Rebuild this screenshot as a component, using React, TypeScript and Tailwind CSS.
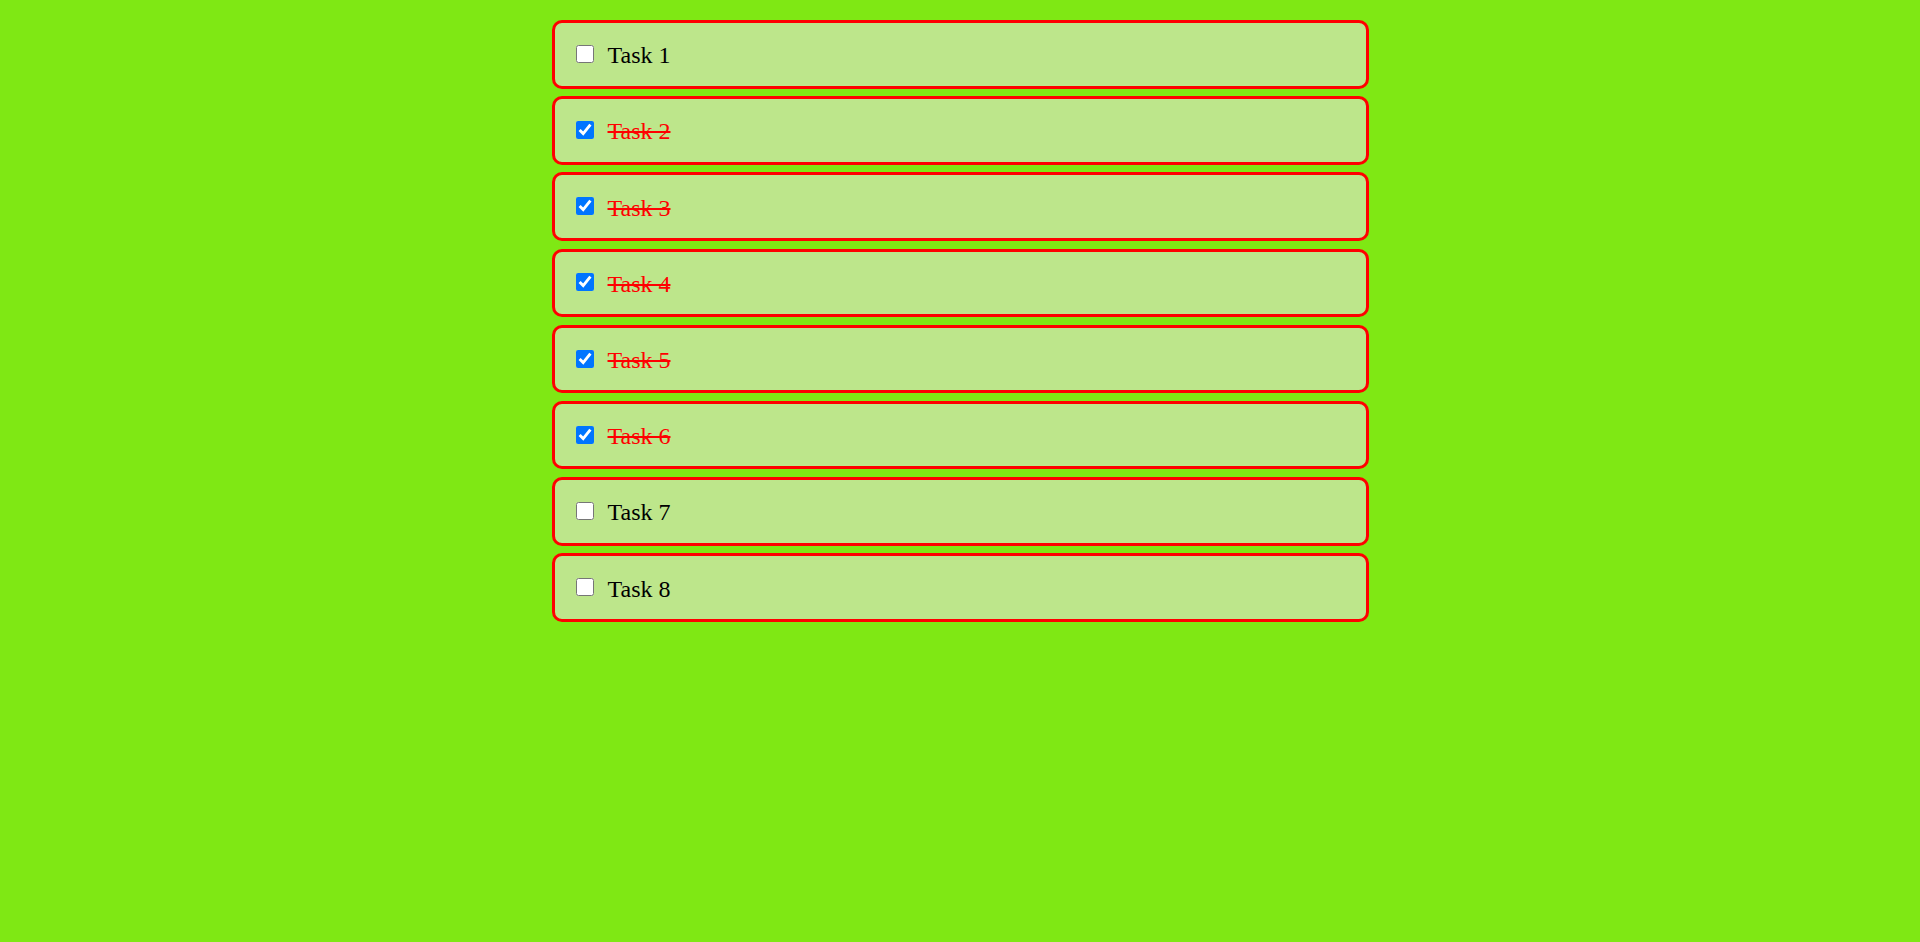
import { useState } from 'react'

const initial = [
  { id: 1, text: 'Task 1', done: false },
  { id: 2, text: 'Task 2', done: true },
  { id: 3, text: 'Task 3', done: true },
  { id: 4, text: 'Task 4', done: true },
  { id: 5, text: 'Task 5', done: true },
  { id: 6, text: 'Task 6', done: true },
  { id: 7, text: 'Task 7', done: false },
  { id: 8, text: 'Task 8', done: false },
]

export default function App() {
  const [tasks, setTasks] = useState(initial)

  const toggle = (id: number) =>
    setTasks((ts) => ts.map((t) => (t.id === id ? { ...t, done: !t.done } : t)))

  return (
    <div className="min-h-screen bg-[#7fe814] pt-[20px] font-['Liberation_Serif',serif]">
      <ul className="mx-auto flex w-[817px] flex-col gap-[7.7px]">
        {tasks.map((t) => (
          <li
            key={t.id}
            className="flex h-[68.5px] items-center rounded-[10px] border-[3px] border-[#ff0000] bg-[#bde68b] pl-[21px]"
          >
            <input
              type="checkbox"
              checked={t.done}
              onChange={() => toggle(t.id)}
              className="m-0 -mt-[1px] mr-[14px] h-[18px] w-[18px]"
            />
            <span className={t.done ? 'pt-[2px] text-[24px] text-[#ff0000] line-through' : 'pt-[2px] text-[24px] text-black'}>
              {t.text}
            </span>
          </li>
        ))}
      </ul>
    </div>
  )
}
